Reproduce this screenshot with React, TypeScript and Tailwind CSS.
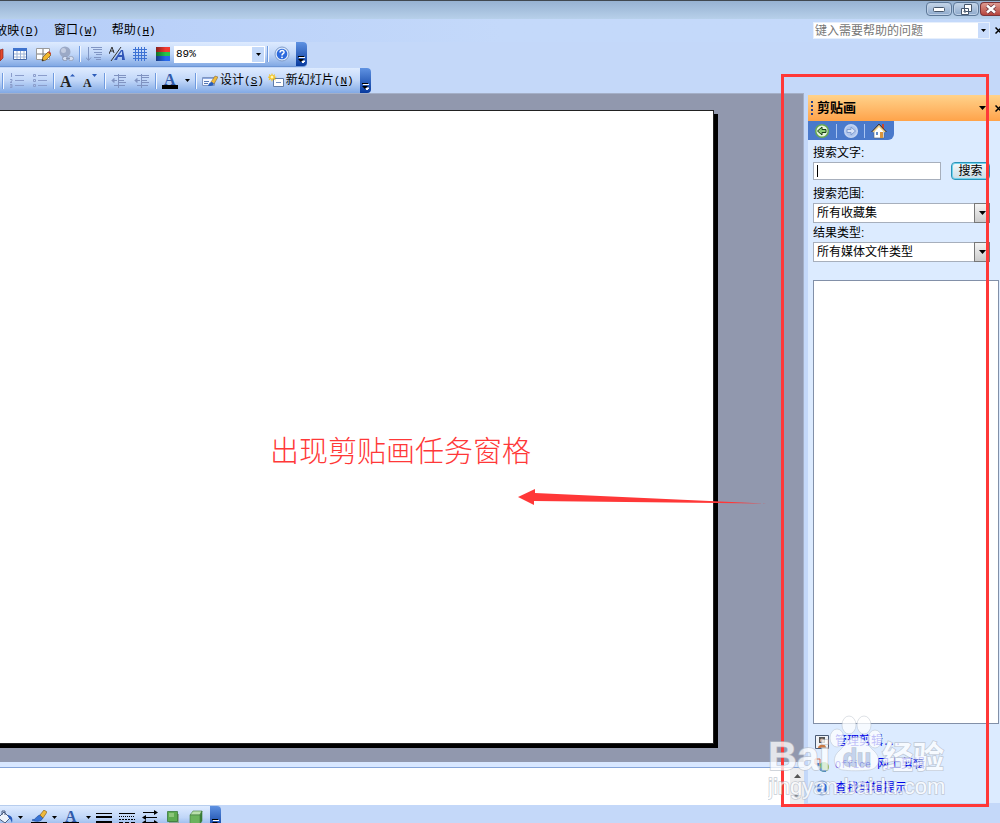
import type { ReactNode } from "react";
import clsx from "clsx";

const box = "block w-4 h-4 shrink-0";

function Key({ children }: { children: string }) {
  return (
    <span className="font-['Liberation_Mono'] text-[11px]">
      (<span className="underline">{children}</span>)
    </span>
  );
}

function Separator() {
  return <span className="w-px h-4 mx-[2px] shrink-0 bg-[#6f9be0] shadow-[1px_0_0_#f2f7ff]" />;
}

function Arrow() {
  return (
    <svg viewBox="0 0 5 3" className="block w-[5px] h-[3px] shrink-0">
      <path d="M0 0h5L2.500 3z" fill="#000" />
    </svg>
  );
}

function ToolButton({
  label,
  children,
  className,
}: {
  label: string;
  children: ReactNode;
  className?: string;
}) {
  return (
    <button
      aria-label={label}
      className={clsx("h-full flex items-center justify-center shrink-0", className || "w-[23px]")}
    >
      {children}
    </button>
  );
}

function EndCap() {
  return (
    <button
      aria-label="工具栏选项"
      className="ml-auto w-[11px] h-full shrink-0 rounded-r-sm bg-gradient-to-b from-[#5f92e2] to-[#083a9e] flex items-end justify-center pb-[3px]"
    >
      <svg viewBox="0 0 7 7" className="w-[7px] h-[7px]">
        <path d="M1 1.500h6M3 5h4L5 7z" stroke="#fff" fill="#fff" />
        <path d="M0 0h6v1H0zM0 3h6L3 6z" fill="#000" />
      </svg>
    </button>
  );
}

function TableIcon({ pencil }: { pencil?: boolean }) {
  return (
    <svg viewBox="0 0 16 16" className={box}>
      <path d="M1.500 2.500h13v11h-13z" fill="#fff" stroke={pencil ? "#9a9a9a" : "#4569a8"} />
      {!pencil && <path d="M1 2h14v3H1z" fill="#3f73cd" />}
      <path
        d={pencil ? "M8 3v10M2 8h12" : "M2 8h12M2 11h12M5 5v8M8.500 5v8M12 5v8"}
        stroke={pencil ? "#777" : "#9db3d6"}
      />
      {pencil && (
        <g>
          <path d="M7 15l1-4 5-5 3 3-5 5z" fill="#f0b62c" stroke="#704f20" strokeWidth=".7" />
          <path d="M13 6l3 3 0-2-2-2z" fill="#d24430" />
          <path d="M7 15l.5-2 1.500 1.500z" fill="#222" />
        </g>
      )}
    </svg>
  );
}

function LinkIcon() {
  return (
    <svg viewBox="0 0 16 16" className={box}>
      <circle cx="7" cy="6" r="5.500" fill="#9ba9c6" />
      <circle cx="5.500" cy="4.500" r="2.500" fill="#c3cce0" />
      <rect x="4.500" y="10.500" width="5" height="4" rx="2" fill="#d5def0" stroke="#8a97b3" />
      <rect x="10.500" y="10.500" width="5" height="4" rx="2" fill="#d5def0" stroke="#98a5bf" />
      <path d="M8 12.500h4" stroke="#8a97b3" />
    </svg>
  );
}

function ExpandIcon() {
  return (
    <svg viewBox="0 0 16 16" className={box} fill="none" stroke="#8196c4">
      <path d="M2.500 1v13M0 11.500l2.500 3 2.500-3M5 1.500h11M7 3.500h9M8 6.500h8M10 8.500h6M8 11.500h7M10 13.500h5" />
    </svg>
  );
}

function FormatIcon() {
  return (
    <svg viewBox="0 0 16 16" className={box}>
      <path d="M0 8L3 1l2 6M1 5h4" fill="none" stroke="#333" />
      <path d="M2 15L12 1" stroke="#333" />
      <path d="M5 14h3l1-3h4v3h3L14 4h-2zM10 9l3-4v4z" fill="#3156b8" fillRule="evenodd" />
    </svg>
  );
}

function GridIcon() {
  return (
    <svg viewBox="0 0 16 16" className={box} stroke="#3d72d4">
      <path d="M3.500 1v14M6.500 1v14M9.500 1v14M12.500 1v14M1 3.500h14M1 6.500h14M1 9.500h14M1 12.500h14" />
    </svg>
  );
}

function ColorIcon() {
  return (
    <svg viewBox="0 0 16 16" className={box}>
      <defs>
        <linearGradient id="shade">
          <stop offset="0" stopColor="#000" stopOpacity=".45" />
          <stop offset=".7" stopColor="#000" stopOpacity="0" />
        </linearGradient>
      </defs>
      <path d="M1 1h14v5H1z" fill="#f23a30" />
      <path d="M1 6h14v4H1z" fill="#25c54c" />
      <path d="M1 10h14v5H1z" fill="#2769ed" />
      <path d="M1 1h14v14H1z" fill="url(#shade)" />
    </svg>
  );
}

function HelpIcon() {
  return (
    <svg viewBox="0 0 16 16" className={box}>
      <circle cx="8" cy="8" r="7" fill="#dce9fb" stroke="#7f9cca" />
      <circle cx="8" cy="8" r="5.300" fill="#2d6add" />
      <path d="M6 6.500c0-3 4.500-2.500 4 0-.3 1.300-2 1.200-2 3" fill="none" stroke="#fff" strokeWidth="1.500" />
      <circle cx="8" cy="11.300" r=".9" fill="#fff" />
    </svg>
  );
}

function ListIcon({ numbered }: { numbered?: boolean }) {
  return (
    <svg viewBox="0 0 16 16" className={box} stroke="#8b9dcb" fill="none">
      <path d="M6 2.500h9M6 7.500h9M6 12.500h9" />
      {numbered ? (
        <path d="M2.500 0v4M1 6.500h2v1.500l-2 1.500h2M1 11.500h2v3H1M1 13h2" />
      ) : (
        <path d="M1.500 1.500h2v2h-2zM1.500 6.500h2v2h-2zM1.500 11.500h2v2h-2z" />
      )}
    </svg>
  );
}

function FontSizeIcon({ grow }: { grow?: boolean }) {
  return (
    <svg viewBox="0 0 16 16" className={clsx(box, "overflow-visible")}>
      <text
        x="0"
        y="14"
        fontFamily="Liberation Serif"
        fontWeight="bold"
        fontSize={grow ? 16 : 12}
        fill="#222"
      >
        A
      </text>
      <path d={grow ? "M10 3.500h5L12.500 1z" : "M9 1h5l-2.500 3z"} fill="#2d5cb9" />
    </svg>
  );
}

function IndentIcon() {
  return (
    <svg viewBox="0 0 16 16" className={box} stroke="#8093c1" fill="none">
      <path d="M3 2.500h12M8 4.500h7M8 7.500h5M8 9.500h7M3 12.500h11M7.500 1v14" />
      <path d="M1 7.500h5M3 5.500v4l-2-2z" fill="#8093c1" />
    </svg>
  );
}

function FontColorIcon() {
  return (
    <svg viewBox="0 0 16 16" className={clsx(box, "overflow-visible")}>
      <text x="2" y="12" fontFamily="Liberation Serif" fontWeight="bold" fontSize="16" fill="#315baa">
        A
      </text>
      <path d="M0 12h16v4H0z" fill="#000" />
    </svg>
  );
}

function DesignIcon() {
  return (
    <svg viewBox="0 0 16 16" className={box}>
      <path d="M.500 4.500h12v8h-12z" fill="#f5f8ff" stroke="#7f96c2" />
      <path d="M1 5h11v1H1z" fill="#8eaae0" />
      <path d="M2 8.500h5M2 10.500h4" stroke="#5578b5" />
      <path d="M9 9l4-6 3 1-4 7z" fill="#efbb3d" stroke="#735d38" strokeWidth=".5" />
      <path d="M6 13c1-3 2-4 4-4l2 2c-1 2-3 2-6 2z" fill="#285db9" />
    </svg>
  );
}

function NewSlideIcon() {
  return (
    <svg viewBox="0 0 16 16" className={box}>
      <path d="M5.500 5.500h10v8h-10z" fill="#fff" stroke="#627da9" />
      <path d="M8 9.500h5" stroke="#7390c1" />
      <path d="M4 0l1 2.500L7 1l-.5 2.500L9 4 6.500 5 8 7.500 5 6 4 9 3 6 .500 7.500 1.500 5-1 4l2.500-.5L1 1l2 1.500z" fill="#f4c21f" />
      <circle cx="4" cy="4" r="1.500" fill="#fff6b5" />
    </svg>
  );
}

function BucketIcon() {
  return (
    <svg viewBox="3 0 13 16" className="block w-[13px] h-4">
      <path d="M1 8l6-6 6 6-5 5z" fill="#eef3fb" stroke="#4b5d80" />
      <path d="M5 5V1h3v4" fill="none" stroke="#4b5d80" />
      <path d="M11 5c4 1 5 3 4 8-1-2-1-4-4-6z" fill="#285aba" />
    </svg>
  );
}

function BrushIcon() {
  return (
    <svg viewBox="0 0 16 16" className={box}>
      <path d="M1 10c4 0 4-4 8-5l3 3c-2 4-7 4-11 2z" fill="#3974d4" stroke="#1d4b9d" strokeWidth=".7" />
      <path d="M9 5l4-5 3 2-4 6z" fill="#f0b93a" stroke="#866323" strokeWidth=".7" />
      <path d="M0 12h16v4H0z" fill="#000" />
    </svg>
  );
}

function GreenShape({ cube }: { cube?: boolean }) {
  return cube ? (
    <svg viewBox="0 0 16 16" className={box} stroke="#3f7d3c" strokeWidth=".6">
      <path d="M2 5l3-4h9l-2 4z" fill="#b9e0ac" />
      <path d="M12 5l2-4v10l-2 3z" fill="#347d32" />
      <path d="M2 5h10v9H2z" fill="#6bb35d" />
    </svg>
  ) : (
    <svg viewBox="0 0 16 16" className={box}>
      <path d="M4 4h10v9H4z" fill="#91a59a" />
      <path d="M2.500 1.500h10v10h-10z" fill="#5daa50" stroke="#2c702b" strokeWidth=".7" />
      <path d="M4 3h5v4H4z" fill="#8cc57b" />
    </svg>
  );
}

function NavArrow({ back }: { back?: boolean }) {
  return (
    <svg viewBox="0 0 16 16" className={box}>
      <circle cx="8" cy="8" r="6.300" fill={back ? "#e6f4dc" : "#afc5ed"} stroke={back ? "#67a851" : "#c3d4f2"} strokeWidth="1.500" />
      <path
        d={back ? "M3.500 8L8 4v2.500h4v3H8V12z" : "M12.500 8L8 4v2.500H4v3h4V12z"}
        fill={back ? "#8ccc72" : "#d8e3f7"}
        stroke={back ? "#173e18" : "#7e9bd0"}
      />
    </svg>
  );
}

function HomeIcon() {
  return (
    <svg viewBox="0 0 16 16" className={box}>
      <path d="M11 1h2v5h-2z" fill="#cb462c" />
      <path d="M3 8l5-5 5 5v7H3z" fill="#fff" stroke="#59616e" strokeWidth=".6" />
      <path d="M2 9l6-6 6 6" fill="none" stroke="#f5d17b" strokeWidth="1.500" />
      <path d="M.500 9L8 1l7.500 8" fill="none" stroke="#4c3526" />
      <path d="M9 9h3v6H9z" fill="#db953c" />
      <path d="M5 9h2v3H5z" fill="#658dc6" />
    </svg>
  );
}

function TitleBar() {
  const frame =
    "w-[26px] h-[14px] border border-[#5d7898] rounded-sm bg-gradient-to-b from-[#c5d5e8] to-[#8da9cc] shadow-[inset_0_0_0_1px_#bed0e6] flex items-center justify-center shrink-0";
  return (
    <header className="h-[19px] shrink-0 border-t border-[#414850] bg-gradient-to-b from-[#97b2d2] to-[#b7d0ea] flex justify-end gap-px overflow-hidden pt-px">
      <button aria-label="最小化" className={frame}>
        <svg viewBox="0 0 12 6" className="w-3 h-[6px]">
          <rect x=".5" y="1.500" width="11" height="4" rx="1" fill="#fff" stroke="#46566b" />
        </svg>
      </button>
      <button aria-label="还原" className={frame}>
        <svg viewBox="0 0 12 11" className="w-3 h-[11px]" fill="#fff" stroke="#46566b">
          <path d="M4.500.500h7v7h-7zM1.500 4.500h7v6h-7z" />
          <path d="M4 7h2v1H4z" />
        </svg>
      </button>
      <button
        aria-label="关闭"
        className="w-5 h-[14px] shrink-0 rounded-l-sm border border-r-0 border-[#7b3438] bg-gradient-to-b from-[#dd9a91] to-[#b5443d] flex items-center justify-center"
      >
        <svg viewBox="0 0 12 10" className="w-3 h-[10px]">
          <path d="M2 1.500l8 7M10 1.500l-8 7" stroke="#653039" strokeWidth="4" />
          <path d="M2 1.500l8 7M10 1.500l-8 7" stroke="#fff" strokeWidth="2.500" />
        </svg>
      </button>
    </header>
  );
}

function CloseMark() {
  return (
    <svg viewBox="0 0 7 7" className="w-[7px] h-[7px] shrink-0">
      <path d="M.500.500l6 6M6.500.500l-6 6" stroke="#000" strokeWidth="1.500" />
    </svg>
  );
}

function MenuBar() {
  return (
    <nav className="h-[23px] shrink-0 flex items-center bg-gradient-to-r from-[#b5cdf8] to-[#c4d9fa] to-50%">
      <button className="w-[39px] flex justify-end whitespace-nowrap overflow-hidden">
        <span>放映</span>
        <Key>D</Key>
      </button>
      <button className="ml-[15px] whitespace-nowrap">
        窗口<Key>W</Key>
      </button>
      <button className="ml-[14px] whitespace-nowrap">
        帮助<Key>H</Key>
      </button>
      <div className="ml-auto w-[177px] h-[17px] bg-white flex items-center border border-[#e6effc]">
        <input
          aria-label="帮助"
          placeholder="键入需要帮助的问题"
          className="min-w-0 flex-1 h-full px-px outline-none placeholder:text-[#777]"
        />
        <button aria-label="帮助列表" className="w-[11px] h-full bg-[#c9dcfb] flex items-center justify-center">
          <Arrow />
        </button>
      </div>
      <button aria-label="关闭窗口" className="w-[10px] pl-[5px] overflow-hidden">
        <CloseMark />
      </button>
    </nav>
  );
}

const bar =
  "flex items-center shrink-0 rounded-r-sm bg-gradient-to-b from-[#deebff] via-[#c0d6f8] to-[#82a9e4]";

function StandardToolbar() {
  return (
    <div className={clsx(bar, "h-[25px] w-[307px] border-b border-[#6d96d5]")}>
      <ToolButton label="图表" className="w-2">
        <svg viewBox="0 0 8 16" className="w-2 h-4">
          <path d="M0 4l3-1v9l-3 3z" fill="#e3492d" stroke="#8e241a" strokeWidth=".7" />
        </svg>
      </ToolButton>
      <ToolButton label="插入表格"><TableIcon /></ToolButton>
      <ToolButton label="表格和边框"><TableIcon pencil /></ToolButton>
      <ToolButton label="超链接"><LinkIcon /></ToolButton>
      <Separator />
      <ToolButton label="全部展开"><ExpandIcon /></ToolButton>
      <ToolButton label="显示格式"><FormatIcon /></ToolButton>
      <ToolButton label="网格"><GridIcon /></ToolButton>
      <ToolButton label="颜色"><ColorIcon /></ToolButton>
      <div className="w-[91px] h-[17px] bg-white flex items-center">
        <input
          aria-label="显示比例"
          defaultValue="89%"
          className="min-w-0 flex-1 h-full pl-[2px] outline-none font-['Liberation_Mono'] text-[11px]"
        />
        <button aria-label="比例列表" className="w-3 h-[15px] mr-px bg-[#c3d9fa] flex items-center justify-center">
          <Arrow />
        </button>
      </div>
      <Separator />
      <ToolButton label="帮助"><HelpIcon /></ToolButton>
      <EndCap />
    </div>
  );
}

function FormatToolbar() {
  return (
    <div className={clsx(bar, "h-[25px] w-[371px] mt-px")}>
      <Separator />
      <ToolButton label="编号"><ListIcon numbered /></ToolButton>
      <ToolButton label="项目符号"><ListIcon /></ToolButton>
      <Separator />
      <ToolButton label="增大字号"><FontSizeIcon grow /></ToolButton>
      <ToolButton label="减小字号"><FontSizeIcon /></ToolButton>
      <Separator />
      <ToolButton label="减少缩进量"><IndentIcon /></ToolButton>
      <ToolButton label="增加缩进量"><IndentIcon /></ToolButton>
      <Separator />
      <ToolButton label="字体颜色"><FontColorIcon /></ToolButton>
      <ToolButton label="字体颜色列表" className="w-3"><Arrow /></ToolButton>
      <Separator />
      <button className="flex items-center gap-[2px] ml-1 whitespace-nowrap">
        <DesignIcon />
        <span>设计<Key>S</Key></span>
      </button>
      <button className="flex items-center gap-[2px] ml-1 whitespace-nowrap">
        <NewSlideIcon />
        <span>新幻灯片<Key>N</Key></span>
      </button>
      <EndCap />
    </div>
  );
}

function DrawingToolbar() {
  return (
    <footer className="h-[18px] shrink-0 overflow-hidden">
      <div className={clsx(bar, "h-6 w-[221px] border-t border-[#b7cdee]")}>
        <ToolButton label="填充颜色" className="w-[13px]"><BucketIcon /></ToolButton>
        <ToolButton label="填充颜色列表" className="w-[14px]"><Arrow /></ToolButton>
        <ToolButton label="线条颜色"><BrushIcon /></ToolButton>
        <ToolButton label="线条颜色列表" className="w-2"><Arrow /></ToolButton>
        <ToolButton label="字体颜色" className="w-[26px]"><FontColorIcon /></ToolButton>
        <ToolButton label="字体颜色列表" className="w-2"><Arrow /></ToolButton>
        <ToolButton label="线型">
          <svg viewBox="0 0 16 16" className={box}>
            <path d="M0 3h16v1H0zM0 6h16v2H0zM0 11h16v4H0z" />
          </svg>
        </ToolButton>
        <ToolButton label="虚线线型">
          <svg viewBox="0 0 16 16" className={box} stroke="#000">
            <path d="M0 3.500h16" />
            <path d="M0 6.500h16" strokeDasharray="1 1" />
            <path d="M0 9.500h16" strokeDasharray="2 1" />
            <path d="M0 12.500h16" strokeDasharray="4 2" />
          </svg>
        </ToolButton>
        <ToolButton label="箭头样式">
          <svg viewBox="0 0 16 16" className={box}>
            <path d="M1 2.500h13M2 7.500h13M1 12.500h14" stroke="#000" />
            <path d="M12 0l4 2.500L12 5zM4 5L0 7.500 4 10zM4 10l-4 2.500L4 15zM12 10l4 2.500-4 2.500z" />
          </svg>
        </ToolButton>
        <ToolButton label="阴影样式"><GreenShape /></ToolButton>
        <ToolButton label="三维效果样式"><GreenShape cube /></ToolButton>
        <EndCap />
      </div>
    </footer>
  );
}

function SelectField({ id, label, value }: { id: string; label: string; value: string }) {
  return (
    <div className="mr-[10px]">
      <label htmlFor={id} className="block h-[19px] leading-5">
        {label}:
      </label>
      <div className="relative h-5">
        <select
          id={id}
          className="appearance-none w-full h-full border border-[#a7afbc] bg-white pl-[3px] pr-4 outline-none"
        >
          <option>{value}</option>
        </select>
        <span className="pointer-events-none absolute right-0 inset-y-0 w-4 border border-[#777] bg-gradient-to-b from-[#f4f4f4] to-[#ccc] flex items-center justify-center">
          <svg viewBox="0 0 7 4" className="w-[7px] h-1">
            <path d="M0 0h7L3.500 4z" />
          </svg>
        </span>
      </div>
    </div>
  );
}

function ClipArtPane() {
  return (
    <aside className="w-[192px] shrink-0 mt-[2px] mb-[2px] bg-[#dcebff] flex flex-col">
      <div className="h-[26px] shrink-0 bg-gradient-to-b from-[#ffd28a] to-[#ffa349] flex items-center pl-[3px] overflow-hidden">
        <svg viewBox="0 0 3 14" className="w-[3px] h-[14px] mr-[3px]">
          <path d="M0 0h2v2H0zM0 4h2v2H0zM0 8h2v2H0zM0 12h2v2H0z" fill="#27408a" />
        </svg>
        <h2 className="flex-1 font-bold text-[13px]">剪贴画</h2>
        <button aria-label="其他任务窗格" className="mr-[9px]">
          <svg viewBox="0 0 7 4" className="w-[7px] h-1">
            <path d="M0 0h7L3.500 4z" />
          </svg>
        </button>
        <button aria-label="关闭窗格" className="w-[5px] overflow-hidden">
          <CloseMark />
        </button>
      </div>
      <div className="w-[86px] h-[19px] shrink-0 bg-[#4a79cb] rounded-br-md flex items-center justify-between pl-[6px] pr-[7px]">
        <button aria-label="后退"><NavArrow back /></button>
        <span className="w-px h-[14px] bg-[#a9c5f2]" />
        <button aria-label="前进"><NavArrow /></button>
        <span className="w-px h-[14px] bg-[#a9c5f2]" />
        <button aria-label="主页"><HomeIcon /></button>
      </div>
      <form className="pl-[5px] flex-1 min-h-0 flex flex-col" onSubmit={(e) => e.preventDefault()}>
        <label htmlFor="query" className="mt-1 h-[18px] leading-[18px]">
          搜索文字:
        </label>
        <div className="flex items-center justify-between mr-[10px] h-[18px] mb-1">
          <div className="w-32 h-[18px] border border-[#a7afbc] bg-white flex items-center pl-[3px]">
            <span className="w-px h-3 bg-black" />
            <input id="query" className="min-w-0 flex-1 h-full outline-none" />
          </div>
          <button
            type="submit"
            className="w-[39px] h-[18px] rounded-sm border border-[#2b93b7] bg-gradient-to-b from-[#f4f8fa] to-[#cbdde6] shadow-[inset_0_0_0_1px_#72d3ee] leading-4"
          >
            搜索
          </button>
        </div>
        <SelectField id="scope" label="搜索范围" value="所有收藏集" />
        <SelectField id="kind" label="结果类型" value="所有媒体文件类型" />
        <div className="mt-[18px] mr-px flex-1 min-h-0 border border-[#8290a8] bg-white" />
      </form>
      <ul className="h-[79px] shrink-0 pl-[6px] pt-[6px] text-[#0000e6]">
        <li className="h-[23px]">
          <a href="#organize" className="flex items-center gap-[5px] h-full">
            <svg viewBox="0 0 16 16" className={box}>
              <path d="M1.500 1.500h13v13h-13z" fill="#eff2f6" stroke="#495b76" />
              <path d="M5 3h6v6H5z" fill="#555" />
              <circle cx="8" cy="6.500" r="2" fill="#ddb48b" />
              <path d="M4 14c0-4 8-5 8 0z" fill="#c87a45" />
            </svg>
            <span>管理剪辑<span className="font-['Liberation_Mono'] text-[10px]">...</span></span>
          </a>
        </li>
        <li className="h-[23px]">
          <a href="#online" className="flex items-center gap-[5px] h-full">
            <svg viewBox="0 0 16 16" className={box} fill="none">
              <path d="M1 2h5v5H1z" stroke="#df6b47" />
              <circle cx="10" cy="10" r="5" fill="#72b862" />
              <path d="M4 6c0 6 3 8 8 8" stroke="#4a83cb" strokeWidth="2" />
            </svg>
            <span><span className="font-['Liberation_Mono'] text-[10px]">Office </span>网上剪辑</span>
          </a>
        </li>
        <li className="h-[23px]">
          <a href="#tips" className="flex items-center gap-[5px] h-full">
            <HelpIcon />
            <span>查找剪辑提示</span>
          </a>
        </li>
      </ul>
    </aside>
  );
}

function Workspace() {
  return (
    <main className="flex-1 min-w-0 flex flex-col mr-1">
      <section className="flex-1 min-h-0 bg-[#9198ae] border-t border-r border-[#a4afc7] flex pt-4 pr-[89px] pb-[18px] overflow-hidden">
        <div className="flex-1 -ml-2 bg-white border border-[#222] shadow-[4px_4px_0_#000]" />
      </section>
      <div className="h-[6px] shrink-0 bg-[#d8e7ff] border-b border-[#85a5da]" />
      <section className="h-[37px] shrink-0 bg-white flex justify-end">
        <div className="w-[14px] bg-[#ededef] flex flex-col items-center justify-between py-[6px]">
          <svg viewBox="0 0 7 4" className="w-[7px] h-1"><path d="M0 4h7L3.500 0z" fill="#555" /></svg>
          <svg viewBox="0 0 7 4" className="w-[7px] h-1"><path d="M0 0h7L3.500 4z" fill="#888" /></svg>
        </div>
      </section>
    </main>
  );
}

function Watermark() {
  return (
    <div className="pointer-events-none absolute right-[52px] bottom-[20px] w-[180px] h-[90px] opacity-75">
      <svg viewBox="0 0 180 90" className="w-full h-full" fill="#fff" stroke="#b6bdc8" strokeWidth=".6">
        <ellipse cx="69" cy="25" rx="7" ry="9" />
        <ellipse cx="81" cy="12" rx="7" ry="9" />
        <ellipse cx="96" cy="12" rx="7" ry="9" />
        <ellipse cx="107" cy="26" rx="7" ry="9" />
        <path d="M88 24c-8 0-10 8-17 14-8 7-5 18 4 19 5 1 19 1 26 0 10-1 13-12 5-19-7-6-9-14-18-14z" />
        <g paintOrder="stroke" strokeWidth="1.500">
          <text x="0" y="57" fontFamily="Liberation Sans" fontWeight="bold" fontSize="40">Bai</text>
          <text x="75" y="53" fontFamily="Liberation Sans" fontWeight="bold" fontSize="23" fill="#bccbe8">du</text>
          <text x="114" y="55" fontFamily="Noto Sans CJK SC" fontWeight="bold" fontSize="31">经验</text>
          <text x="0" y="81" fontFamily="Liberation Sans" fontSize="22">jingyan.baidu.com</text>
        </g>
      </svg>
    </div>
  );
}

function Annotations() {
  return (
    <div className="pointer-events-none absolute inset-0 text-[#ff3838]">
      <p className="absolute left-[270px] top-[431px] text-[29px] leading-[42px] font-light whitespace-nowrap">
        出现剪贴画任务窗格
      </p>
      <svg viewBox="0 0 250 20" className="absolute left-[518px] top-[487px] w-[250px] h-5">
        <path d="M0 10L17 2v4l231 10.500L16 14v4z" fill="#ff3838" />
      </svg>
      <div className="absolute right-[11px] top-[74px] bottom-[16px] w-[208px] border-3 border-[#ff3838]" />
    </div>
  );
}

export default function App() {
  return (
    <div className="relative h-screen flex flex-col overflow-hidden bg-[#c4d8f9] text-black text-[12px] leading-4 font-['Liberation_Sans','Noto_Sans_CJK_SC',sans-serif]">
      <TitleBar />
      <MenuBar />
      <StandardToolbar />
      <FormatToolbar />
      <div className="flex-1 min-h-0 flex">
        <Workspace />
        <ClipArtPane />
      </div>
      <DrawingToolbar />
      <Annotations />
      <Watermark />
    </div>
  );
}
